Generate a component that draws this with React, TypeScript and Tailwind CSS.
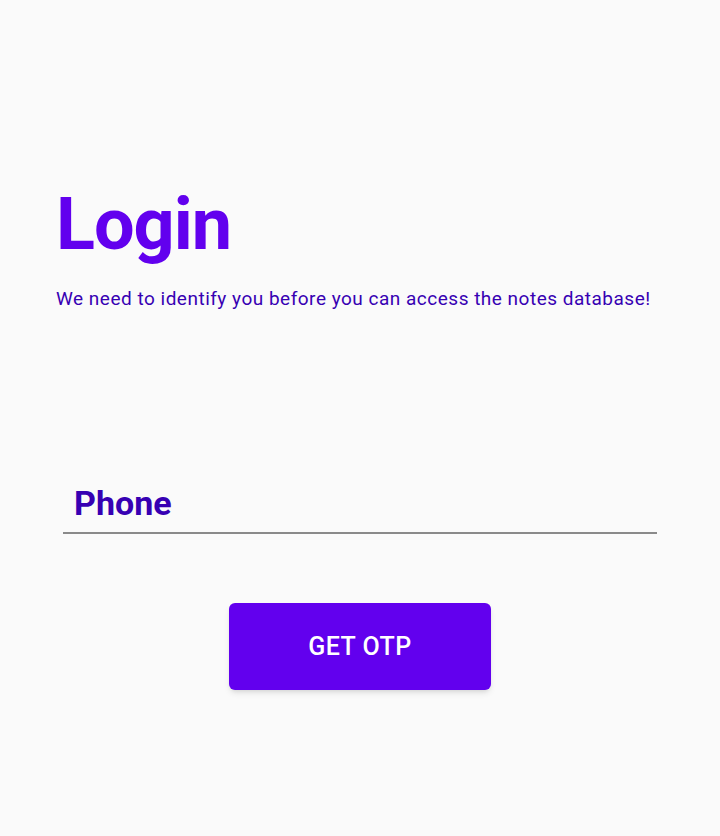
export default function App() {
  return (
    <div
      className="w-[720px] h-[836px] bg-[#fafafa] overflow-hidden"
      style={{ fontFamily: 'Roboto, "Liberation Sans", sans-serif' }}
    >
      <div className="pt-[183px] pl-[56px]">
        <h1 className="text-[72px] leading-[84px] font-bold tracking-[-1px] text-[#6200ee]">Login</h1>
        <p className="mt-[20px] text-[19px] leading-[24px] tracking-[0.5px] text-[#3700b3]">
          We need to identify you before you can access the notes database!
        </p>
      </div>

      <div className="mt-[172px] mx-[63px] w-[594px]">
        <div className="pl-[11px] pb-[9px] text-[34px] leading-[40px] font-bold text-[#3700b3]">
          Phone
        </div>
        <div className="h-[2px] bg-[#8a8a8a]" />
      </div>

      <div className="mt-[69px] flex justify-center">
        <button className="w-[262px] h-[87px] rounded-[6px] bg-[#6200ee] text-white text-[25px] font-medium tracking-[0.5px] shadow-md">
          GET OTP
        </button>
      </div>
    </div>
  );
}
